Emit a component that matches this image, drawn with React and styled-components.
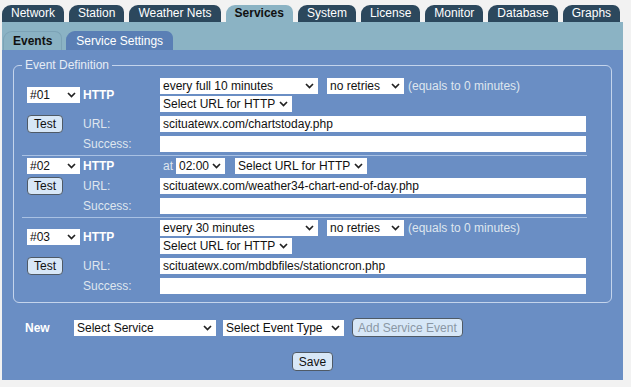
import React from 'react';
import styled, { createGlobalStyle } from 'styled-components';

const GlobalStyle = createGlobalStyle`
  body {
    margin: 0;
    background: #f2f2f2;
    font-family: "Liberation Sans", Arial, sans-serif;
    font-size: 12px;
  }
`;

const Page = styled.div`
  width: 621px;
  padding: 5px 0 0 2px;
`;

const TabBar = styled.div`
  display: flex;
  gap: 5px;
  height: 17px;
`;

const Tab = styled.div`
  height: 17px;
  line-height: 17px;
  padding: 0 9px;
  border-radius: 9px 7px 0 0;
  background: ${p => (p.$active ? '#8bb3c4' : '#2c485d')};
  color: ${p => (p.$active ? '#111' : '#fff')};
  font-weight: ${p => (p.$active ? 'bold' : 'normal')};
  white-space: nowrap;
`;

const SubBand = styled.div`
  display: flex;
  align-items: flex-end;
  gap: 4px;
  height: 28px;
  padding-left: 1px;
  background: #8bb3c4;
`;

const SubTab = styled.div`
  height: 19px;
  line-height: 19px;
  padding: 0 9px;
  box-sizing: border-box;
  border-radius: 9px 7px 0 0;
  background: ${p => (p.$active ? '#8ab2c3' : '#5a7fb5')};
  color: ${p => (p.$active ? '#111' : '#fff')};
  font-weight: ${p => (p.$active ? 'bold' : 'normal')};
  border: 1px solid ${p => (p.$active ? '#7ca3b6' : '#5a7fb5')};
  border-bottom: none;
`;

const Panel = styled.div`
  background: #6a8ec4;
  padding: 8px 11px 9px;
`;

const Fieldset = styled.fieldset`
  margin: 0;
  border: 1px solid #c4d4ec;
  border-radius: 6px;
  padding: 4px 0 5px 8px;
`;

const Legend = styled.legend`
  padding: 0 3px;
  line-height: 14px;
  color: #e6ecf5;
`;

const EventBlock = styled.div`
  display: grid;
  grid-template-columns: 56px 77px 426px;
  row-gap: 3px;
  width: 565px;
  box-sizing: border-box;
  padding: 2px 0 3px 5px;
  border-top: ${p => (p.$first ? 'none' : '1px solid #a9c1e3')};
`;

const Cell = styled.div`
  display: flex;
  align-items: center;
`;

const Stack = styled.div`
  display: flex;
  flex-direction: column;
  gap: 2px;
`;

const Line = styled.div`
  display: flex;
  align-items: center;
`;

const Kind = styled.span`
  color: #fff;
  font-weight: bold;
`;

const Label = styled.span`
  color: #dfe6ef;
  margin-left: ${p => p.$ml || 0}px;
`;

const Dropdown = styled.div`
  display: flex;
  align-items: center;
  justify-content: space-between;
  width: ${p => p.$w}px;
  height: 16px;
  margin-left: ${p => p.$ml || 0}px;
  padding: 0 4px 0 3px;
  box-sizing: border-box;
  background: #fff;
  color: #111;
  white-space: nowrap;
`;

const TextField = styled.input`
  width: 426px;
  height: 16px;
  padding: 0 3px;
  box-sizing: border-box;
  border: none;
  outline: none;
  background: #fff;
  color: #111;
  font-family: "Liberation Sans", Arial, sans-serif;
  font-size: 12px;
`;

const Button = styled.button`
  height: ${p => p.$h || 19}px;
  padding: 0 ${p => p.$px || 6}px;
  border: 1px solid #4f5a66;
  border-radius: 4px;
  background: #d7e7f7;
  color: ${p => (p.disabled ? '#8a97a5' : '#111')};
  font-family: "Liberation Sans", Arial, sans-serif;
  font-size: 12px;
  line-height: 1;
`;

const NewRow = styled.div`
  display: flex;
  align-items: center;
  margin-top: 15px;
  padding-left: 12px;
`;

const NewLabel = styled.span`
  width: 49px;
  color: #fff;
  font-weight: bold;
`;

const SaveRow = styled.div`
  display: flex;
  justify-content: center;
  margin-top: 15px;
`;

function Chevron() {
  return (
    <svg width="9" height="6" viewBox="0 0 9 6">
      <polyline points="1,1 4.5,4.5 8,1" fill="none" stroke="#222" strokeWidth="1.7" />
    </svg>
  );
}

function Select({ w, ml, children }) {
  return (
    <Dropdown $w={w} $ml={ml}>
      <span>{children}</span>
      <Chevron />
    </Dropdown>
  );
}

const tabs = ['Network', 'Station', 'Weather Nets', 'Services', 'System', 'License', 'Monitor', 'Database', 'Graphs'];

const events = [
  { id: '#01', interval: 'every full 10 minutes', url: 'scituatewx.com/chartstoday.php' },
  { id: '#02', at: '02:00', url: 'scituatewx.com/weather34-chart-end-of-day.php' },
  { id: '#03', interval: 'every 30 minutes', url: 'scituatewx.com/mbdbfiles/stationcron.php' },
];

function Schedule({ ev }) {
  if (ev.at) {
    return (
      <Line>
        <Label $ml={3}>at</Label>
        <Select w={49} ml={3}>{ev.at}</Select>
        <Select w={132} ml={10}>Select URL for HTTP</Select>
      </Line>
    );
  }
  return (
    <Stack>
      <Line>
        <Select w={158}>{ev.interval}</Select>
        <Select w={77} ml={9}>no retries</Select>
        <Label $ml={4}>(equals to 0 minutes)</Label>
      </Line>
      <Select w={132}>Select URL for HTTP</Select>
    </Stack>
  );
}

function Event({ ev, first }) {
  return (
    <EventBlock $first={first}>
      <Cell><Select w={53}>{ev.id}</Select></Cell>
      <Cell><Kind>HTTP</Kind></Cell>
      <Schedule ev={ev} />

      <Cell><Button $h={18}>Test</Button></Cell>
      <Cell><Label>URL:</Label></Cell>
      <Cell><TextField readOnly value={ev.url} /></Cell>

      <Cell />
      <Cell><Label>Success:</Label></Cell>
      <Cell><TextField readOnly value="" /></Cell>
    </EventBlock>
  );
}

export default function App() {
  return (
    <>
      <GlobalStyle />
      <Page>
        <TabBar>
          {tabs.map(t => (
            <Tab key={t} $active={t === 'Services'}>{t}</Tab>
          ))}
        </TabBar>
        <SubBand>
          <SubTab $active>Events</SubTab>
          <SubTab>Service Settings</SubTab>
        </SubBand>
        <Panel>
          <Fieldset>
            <Legend>Event Definition</Legend>
            {events.map((ev, i) => (
              <Event key={ev.id} ev={ev} first={i === 0} />
            ))}
          </Fieldset>
          <NewRow>
            <NewLabel>New</NewLabel>
            <Select w={142}>Select Service</Select>
            <Select w={121} ml={7}>Select Event Type</Select>
            <Button $px={5} disabled style={{ marginLeft: 8 }}>Add Service Event</Button>
          </NewRow>
          <SaveRow>
            <Button>Save</Button>
          </SaveRow>
        </Panel>
      </Page>
    </>
  );
}
